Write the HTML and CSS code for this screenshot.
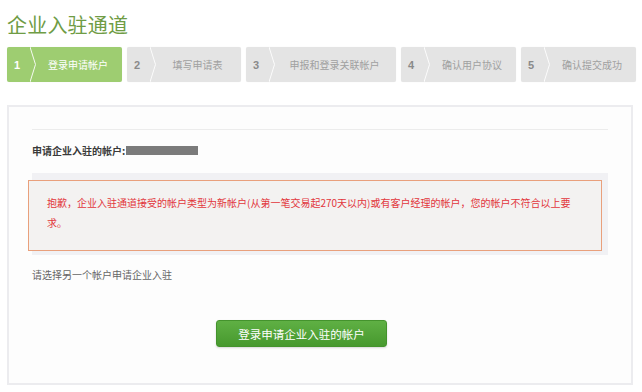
FILE: index.html
```html
<!DOCTYPE html>
<html lang="zh-CN">
<head>
<meta charset="utf-8">
<title>企业入驻通道</title>
<link rel="stylesheet" href="styles.css">
</head>
<body>
<div class="page">
  <h1 class="title">企业入驻通道</h1>
  <ol class="steps">
    <li class="step active"><span class="num">1</span><svg class="chev" viewBox="0 0 6 35" width="6" height="35"><polyline points="0,0 5.5,17.5 0,35" fill="none" stroke="#fff" stroke-width="1"/></svg><span class="label">登录申请帐户</span></li>
    <li class="step w114"><span class="num">2</span><svg class="chev" viewBox="0 0 6 35" width="6" height="35"><polyline points="0,0 5.5,17.5 0,35" fill="none" stroke="#fff" stroke-width="1"/></svg><span class="label">填写申请表</span></li>
    <li class="step wide"><span class="num">3</span><svg class="chev" viewBox="0 0 6 35" width="6" height="35"><polyline points="0,0 5.5,17.5 0,35" fill="none" stroke="#fff" stroke-width="1"/></svg><span class="label">申报和登录关联帐户</span></li>
    <li class="step"><span class="num">4</span><svg class="chev" viewBox="0 0 6 35" width="6" height="35"><polyline points="0,0 5.5,17.5 0,35" fill="none" stroke="#fff" stroke-width="1"/></svg><span class="label">确认用户协议</span></li>
    <li class="step"><span class="num">5</span><svg class="chev" viewBox="0 0 6 35" width="6" height="35"><polyline points="0,0 5.5,17.5 0,35" fill="none" stroke="#fff" stroke-width="1"/></svg><span class="label">确认提交成功</span></li>
  </ol>
  <div class="card">
    <div class="divider"></div>
    <div class="account"><span class="account-label">申请企业入驻的帐户:</span><span class="masked"></span></div>
    <div class="band">
      <div class="alert">抱歉，企业入驻通道接受的帐户类型为新帐户(从第一笔交易起270天以内)或有客户经理的帐户，您的帐户不符合以上要求。</div>
    </div>
    <p class="hint">请选择另一个帐户申请企业入驻</p>
    <button class="btn" type="button">登录申请企业入驻的帐户</button>
  </div>
</div>
</body>
</html>
```
FILE: styles.css
```css
html, body {
  margin: 0;
  padding: 0;
  background: #ffffff;
}
body {
  font-family: "Noto Sans CJK SC", "Microsoft YaHei", sans-serif;
  font-size: 10px;
  color: #333;
}
.page {
  padding: 0 6px 0 7px;
}
.title {
  margin: 12px 0 0 0;
  font-size: 20px;
  line-height: 26px;
  font-weight: normal;
  color: #6f9c45;
  letter-spacing: 0.2px;
}
.steps {
  list-style: none;
  margin: 9px 0 0 0;
  padding: 0;
  display: flex;
  gap: 5px;
}
.step {
  width: 115px;
  height: 35px;
  display: flex;
  align-items: center;
  background: #e4e4e4;
  border-radius: 2px;
  color: #a0a0a0;
  box-shadow: 0 0 1px rgba(0,0,0,0.08);
}
.step.w114 { width: 114px; }
.step.wide { width: 150px; }
.step.active {
  background: #9ecd71;
  color: #fff;
}
.num {
  width: 16px;
  padding-left: 7px;
  font-size: 11px;
  font-weight: bold;
  color: #8a8a8a;
  font-family: "Liberation Sans", Arial, sans-serif;
}
.step.active .num { color: #fff; }
.chev { flex: none; opacity: 0.9; }
.label {
  flex: 1;
  text-align: center;
  font-size: 10px;
  padding-right: 2px;
}
.card {
  margin-top: 23px;
  width: 626px;
  border: 2px solid #ececef;
  background: #fdfdfd;
  padding: 22px 23px 36px 23px;
  box-sizing: border-box;
}
.divider {
  border-top: 1px solid #ececec;
}
.account {
  margin-top: 10px;
  height: 20px;
  display: flex;
  align-items: center;
}
.account-label {
  font-weight: bold;
  color: #3a3a3a;
  font-size: 10px;
}
.masked {
  display: inline-block;
  width: 72px;
  height: 9px;
  background: #7b7b7b;
  margin-left: 1px;
}
.band {
  margin-top: 13px;
  background: #f1f1f4;
  padding: 7px 6px 4px 0;
}
.alert {
  margin-left: -4px;
  border: 1px solid #e9a07c;
  background: #f3f2f1;
  color: #e2363c;
  font-size: 10px;
  line-height: 20px;
  padding: 12px 30px 17px 18px;
  min-height: 40px;
}
.hint {
  margin: 10px 0 0 0;
  line-height: 20px;
  color: #666;
  font-size: 10px;
}
.btn {
  display: block;
  margin: 35px 0 0 184px;
  width: 171px;
  height: 27px;
  border: 1px solid #44932d;
  border-radius: 3px;
  background: linear-gradient(#5fb044, #47992e);
  color: #fff;
  font-family: "Noto Sans CJK SC", sans-serif;
  font-size: 11.5px;
  padding: 0;
  box-shadow: 0 1px 2px rgba(0,0,0,0.15);
}
```
